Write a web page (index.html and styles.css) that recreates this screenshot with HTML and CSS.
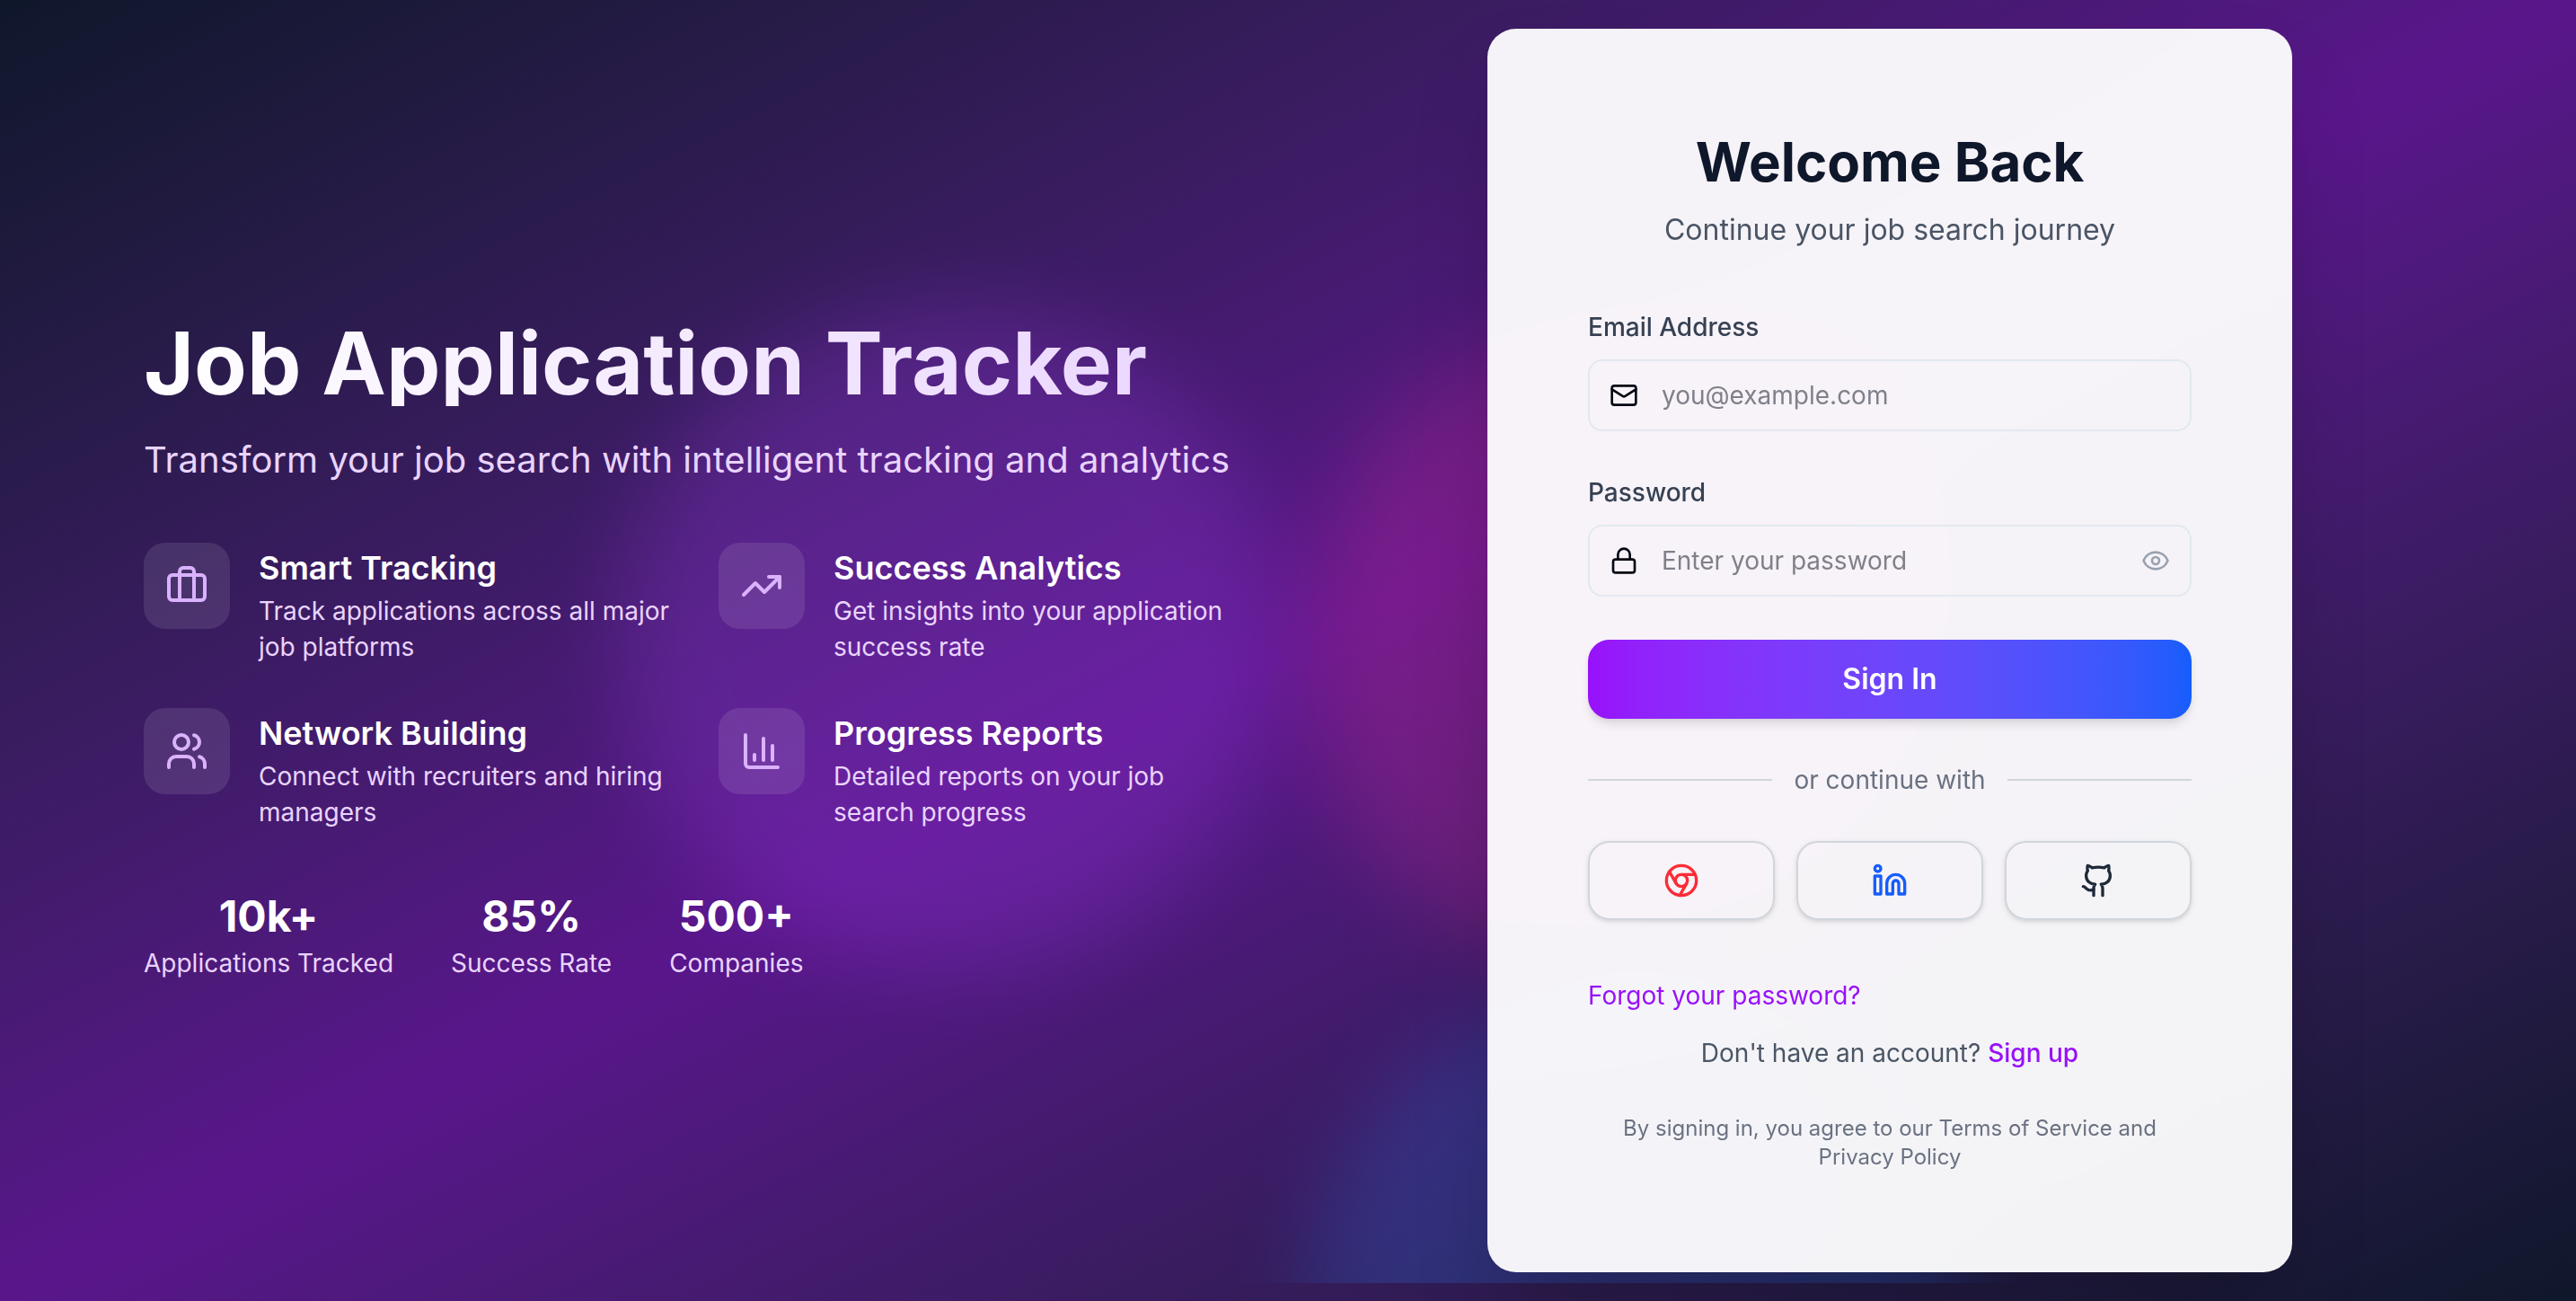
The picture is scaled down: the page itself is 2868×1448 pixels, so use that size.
FILE: index.html
```html
<!DOCTYPE html>
<html lang="en">
<head>
  <meta charset="utf-8">
  <meta name="viewport" content="width=device-width, initial-scale=1">
  <title>Job Application Tracker - Sign in</title>
  <link rel="stylesheet" href="styles.css">
</head>
<body>
  <div class="page">
    <div class="glow" aria-hidden="true">
      <span class="blob blob-purple"></span>
      <span class="blob blob-pink"></span>
      <span class="blob blob-blue"></span>
    </div>

    <main class="layout">
      <section class="intro">
        <h1 class="intro-title">Job Application Tracker</h1>
        <p class="intro-lead">Transform your job search with intelligent tracking and analytics</p>

        <ul class="features">
          <li class="feature">
            <span class="feature-icon">
              <svg class="icon icon-lg" viewBox="0 0 24 24" aria-hidden="true"><path d="M16 20V4a2 2 0 0 0-2-2h-4a2 2 0 0 0-2 2v16"/><rect width="20" height="14" x="2" y="6" rx="2"/></svg>
            </span>
            <div>
              <h2 class="feature-title">Smart Tracking</h2>
              <p class="feature-text">Track applications across all major job platforms</p>
            </div>
          </li>
          <li class="feature">
            <span class="feature-icon">
              <svg class="icon icon-lg" viewBox="0 0 24 24" aria-hidden="true"><path d="M16 7h6v6"/><path d="m22 7-8.5 8.5-5-5L2 17"/></svg>
            </span>
            <div>
              <h2 class="feature-title">Success Analytics</h2>
              <p class="feature-text">Get insights into your application success rate</p>
            </div>
          </li>
          <li class="feature">
            <span class="feature-icon">
              <svg class="icon icon-lg" viewBox="0 0 24 24" aria-hidden="true"><path d="M16 21v-2a4 4 0 0 0-4-4H6a4 4 0 0 0-4 4v2"/><path d="M16 3.128a4 4 0 0 1 0 7.744"/><path d="M22 21v-2a4 4 0 0 0-3-3.87"/><circle cx="9" cy="7" r="4"/></svg>
            </span>
            <div>
              <h2 class="feature-title">Network Building</h2>
              <p class="feature-text">Connect with recruiters and hiring managers</p>
            </div>
          </li>
          <li class="feature">
            <span class="feature-icon">
              <svg class="icon icon-lg" viewBox="0 0 24 24" aria-hidden="true"><path d="M3 3v16a2 2 0 0 0 2 2h16"/><path d="M18 17V9"/><path d="M13 17V5"/><path d="M8 17v-3"/></svg>
            </span>
            <div>
              <h2 class="feature-title">Progress Reports</h2>
              <p class="feature-text">Detailed reports on your job search progress</p>
            </div>
          </li>
        </ul>

        <dl class="stats">
          <div class="stat"><dt class="stat-label">Applications Tracked</dt><dd class="stat-value">10k+</dd></div>
          <div class="stat"><dt class="stat-label">Success Rate</dt><dd class="stat-value">85%</dd></div>
          <div class="stat"><dt class="stat-label">Companies</dt><dd class="stat-value">500+</dd></div>
        </dl>
      </section>

      <section class="card">
        <h2 class="card-title">Welcome Back</h2>
        <p class="card-lead">Continue your job search journey</p>

        <form class="form">
          <div class="field">
            <label class="label" for="email">Email Address</label>
            <div class="control">
              <svg class="icon icon-sm" viewBox="0 0 24 24" aria-hidden="true"><path d="m22 7-8.991 5.727a2 2 0 0 1-2.009 0L2 7"/><rect x="2" y="4" width="20" height="16" rx="2"/></svg>
              <input class="input" id="email" type="email" placeholder="you@example.com">
            </div>
          </div>

          <div class="field">
            <label class="label" for="password">Password</label>
            <div class="control">
              <svg class="icon icon-sm" viewBox="0 0 24 24" aria-hidden="true"><rect width="18" height="11" x="3" y="11" rx="2"/><path d="M7 11V7a5 5 0 0 1 10 0v4"/></svg>
              <input class="input" id="password" type="password" placeholder="Enter your password">
              <button class="reveal" type="button" aria-label="Show password">
                <svg class="icon icon-sm" viewBox="0 0 24 24" aria-hidden="true"><path d="M2.062 12.348a1 1 0 0 1 0-.696 10.75 10.75 0 0 1 19.876 0 1 1 0 0 1 0 .696 10.75 10.75 0 0 1-19.876 0"/><circle cx="12" cy="12" r="3"/></svg>
              </button>
            </div>
          </div>

          <button class="submit" type="submit">Sign In</button>

          <div class="divider">or continue with</div>

          <div class="socials">
            <button class="social social-google" type="button" aria-label="Continue with Google">
              <svg class="icon icon-md" viewBox="0 0 24 24" aria-hidden="true"><circle cx="12" cy="12" r="10"/><circle cx="12" cy="12" r="4"/><path d="M21.17 8H12"/><path d="M3.95 6.06 8.54 14"/><path d="M10.88 21.94 15.46 14"/></svg>
            </button>
            <button class="social social-linkedin" type="button" aria-label="Continue with LinkedIn">
              <svg class="icon icon-md" viewBox="0 0 24 24" aria-hidden="true"><path d="M16 8a6 6 0 0 1 6 6v7h-4v-7a2 2 0 0 0-4 0v7h-4v-7a6 6 0 0 1 6-6z"/><rect width="4" height="12" x="2" y="9"/><circle cx="4" cy="4" r="2"/></svg>
            </button>
            <button class="social social-github" type="button" aria-label="Continue with GitHub">
              <svg class="icon icon-md" viewBox="0 0 24 24" aria-hidden="true"><path d="M15 22v-4a4.8 4.8 0 0 0-1-3.5c3 0 6-2 6-5.5.08-1.25-.27-2.48-1-3.5.28-1.15.28-2.35 0-3.5 0 0-1 0-3 1.5-2.64-.5-5.36-.5-8 0C6 2 5 2 5 2c-.3 1.15-.3 2.35 0 3.5A5.403 5.403 0 0 0 4 9c0 3.5 3 5.5 6 5.5-.39.49-.68 1.05-.85 1.65-.17.6-.22 1.23-.15 1.85v4"/><path d="M9 18c-4.51 2-5-2-7-2"/></svg>
            </button>
          </div>
        </form>

        <div class="links">
          <a class="link" href="#forgot">Forgot your password?</a>
          <p class="signup">Don't have an account? <a class="link link-strong" href="#signup">Sign up</a></p>
        </div>
        <p class="terms">By signing in, you agree to our Terms of Service and Privacy Policy</p>
      </section>
    </main>
  </div>
</body>
</html>
```
FILE: styles.css
```css
*,
*::before,
*::after {
  box-sizing: border-box;
}

body,
h1,
h2,
p,
ul,
dl,
dd {
  margin: 0;
  padding: 0;
}

body {
  font-family: Inter, "Liberation Sans", sans-serif;
  font-size: 28px;
  line-height: 40px;
  color: #030712;
}

button,
input {
  font: inherit;
  color: inherit;
}

button {
  padding: 0;
  border: 0;
  background: none;
  cursor: pointer;
}

/* Page and background */

.page {
  position: relative;
  display: flex;
  min-height: 100vh;
  overflow: hidden;
  background: linear-gradient(to bottom right in oklab, #0f172b, #59168b, #0f172b);
}

.glow {
  position: absolute;
  inset: 0 0 20px;
  overflow: hidden;
}

.blob {
  position: absolute;
  width: 736px;
  height: 736px;
  border-radius: 50%;
  filter: blur(48px);
  opacity: 0.2;
}

.blob-purple {
  left: calc(50% - 745px);
  top: 342px;
  background: #ad46ff;
}

.blob-pink {
  left: calc(50% + 18px);
  top: 354px;
  background: #f6339a;
}

.blob-blue {
  left: calc(50% + 18px);
  bottom: -405px;
  background: #2b7fff;
}

.layout {
  position: relative;
  flex: 1;
  display: grid;
  grid-template-columns: 335fr 356fr;
  align-items: center;
  padding: 32px 52px;
}

.icon {
  display: block;
  flex: none;
  fill: none;
  stroke: currentColor;
  stroke-width: 2;
  stroke-linecap: round;
  stroke-linejoin: round;
}

.icon-sm {
  width: 32px;
  height: 32px;
}

.icon-md {
  width: 40px;
  height: 40px;
}

.icon-lg {
  width: 48px;
  height: 48px;
}

/* Intro column */

.intro {
  padding-left: 108px;
  color: #e9d4ff;
}

.intro-title {
  margin-bottom: 32px;
  font-size: 96px;
  line-height: 96px;
  font-weight: 700;
  color: transparent;
  background: linear-gradient(to right in oklab, #fff, #e9d4ff);
  background-clip: text;
}

.intro-lead {
  margin-bottom: 64px;
  font-size: 40px;
  line-height: 56px;
}

.features {
  display: grid;
  grid-template-columns: 1fr 1fr;
  gap: 48px;
  margin-bottom: 64px;
  list-style: none;
}

.feature {
  display: flex;
  align-items: flex-start;
  gap: 32px;
}

.feature-icon {
  padding: 24px;
  border-radius: 24px;
  background: rgb(255 255 255 / 0.1);
  color: #dab2ff;
}

.feature-title {
  font-size: 36px;
  line-height: 56px;
  font-weight: 600;
  color: #fff;
}

.stats {
  display: flex;
  gap: 64px;
}

.stat {
  display: flex;
  flex-direction: column-reverse;
  text-align: center;
}

.stat-value {
  font-size: 48px;
  line-height: 64px;
  font-weight: 700;
  color: #fff;
}

/* Sign-in card */

.card {
  justify-self: center;
  width: 100%;
  max-width: 896px;
  padding: 112px;
  border-radius: 32px;
  background: rgb(255 255 255 / 0.95);
  backdrop-filter: blur(48px);
  box-shadow: 0 50px 100px -24px rgb(0 0 0 / 0.25);
}

.card-title {
  margin-bottom: 16px;
  font-size: 60px;
  line-height: 72px;
  font-weight: 700;
  text-align: center;
  color: #0f172b;
}

.card-lead {
  margin-bottom: 64px;
  font-size: 32px;
  line-height: 48px;
  text-align: center;
  color: #4a5565;
}

.form {
  display: flex;
  flex-direction: column;
  gap: 48px;
  margin-bottom: 64px;
}

.label {
  display: block;
  margin-bottom: 16px;
  font-weight: 500;
  color: #364153;
}

.control {
  display: flex;
  align-items: center;
  gap: 24px;
  height: 80px;
  padding: 0 22px;
  border: 2px solid #e2e8f0;
  border-radius: 16px;
}

.input {
  flex: 1;
  min-width: 0;
  height: 40px;
  padding: 0 2px;
  border: 0;
  outline: 0;
  background: none;
}

.input::placeholder {
  color: #80808a;
}

.reveal {
  color: #99a1af;
}

.submit {
  height: 88px;
  border-radius: 24px;
  background: linear-gradient(to right in oklab, #9810fa, #155dfc);
  box-shadow: 0 8px 12px -2px rgb(0 0 0 / 0.1), 0 4px 8px -4px rgb(0 0 0 / 0.1);
  font-size: 32px;
  font-weight: 600;
  color: #fff;
}

.divider {
  display: flex;
  align-items: center;
  gap: 24px;
  color: #6a7282;
}

.divider::before,
.divider::after {
  content: "";
  flex: 1;
  height: 2px;
  background: #d1d5dc;
}

.socials {
  display: grid;
  grid-template-columns: repeat(3, 1fr);
  gap: 24px;
}

.social {
  display: flex;
  align-items: center;
  justify-content: center;
  height: 88px;
  border: 2px solid #d1d5dc;
  border-radius: 24px;
  box-shadow: 0 2px 6px rgb(0 0 0 / 0.1), 0 2px 4px -2px rgb(0 0 0 / 0.1);
}

.social-google {
  color: #fb2c36;
}

.social-linkedin {
  color: #155dfc;
}

.social-github {
  color: #1e2939;
}

.links {
  display: flex;
  flex-direction: column;
  align-items: flex-start;
  gap: 24px;
  margin-bottom: 48px;
}

.link {
  color: #9810fa;
  text-decoration: none;
}

.link-strong {
  font-weight: 500;
}

.signup {
  align-self: center;
  color: #4a5565;
}

.terms {
  font-size: 24px;
  line-height: 32px;
  text-align: center;
  color: #6a7282;
}

@media (max-width: 2000px) {
  .layout {
    grid-template-columns: 1fr;
    gap: 64px;
  }

  .intro {
    padding-left: 0;
  }
}
```
